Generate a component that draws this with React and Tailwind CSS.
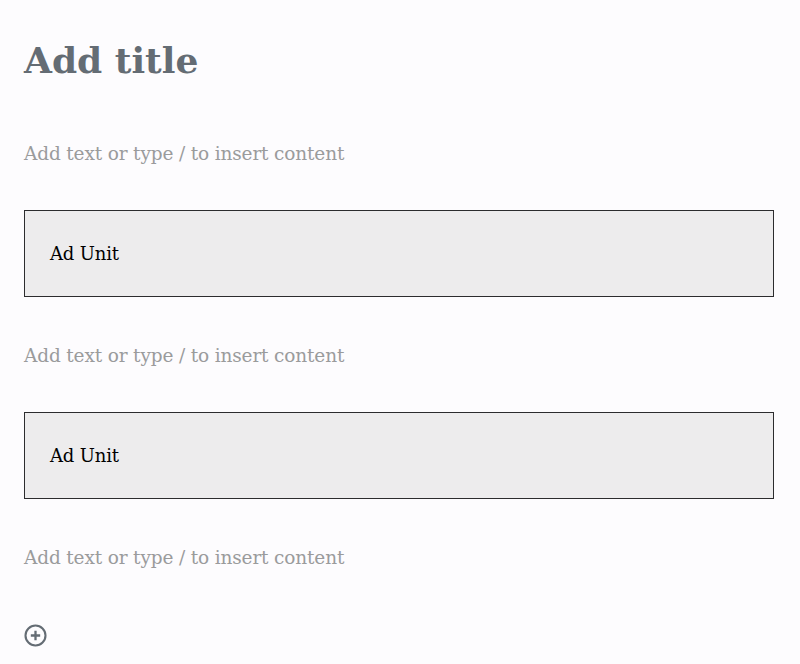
import React from "react";

const serif = { fontFamily: '"DejaVu Serif", "Liberation Serif", serif' };

function Placeholder() {
  return (
    <p className="text-[18.5px] leading-[28px] text-[#9a9b9c] tracking-[-0.15px]" style={serif}>
      Add text or type / to insert content
    </p>
  );
}

function AdUnit() {
  return (
    <div className="h-[87px] border border-[#2c2c2e] bg-[#edeced] flex items-center pl-[25px]">
      <span className="text-[18px] text-black tracking-[-0.15px]" style={serif}>Ad Unit</span>
    </div>
  );
}

export default function App() {
  return (
    <div className="w-[800px] h-[664px] bg-[#fdfcfe] overflow-hidden px-[24px] pt-[36px]">
      <h1 className="text-[36px] leading-[48px] font-bold text-[#646c74]" style={serif}>Add title</h1>
      <div className="mt-[56px]"><Placeholder /></div>
      <div className="mt-[42px] mr-[2px]"><AdUnit /></div>
      <div className="mt-[45px]"><Placeholder /></div>
      <div className="mt-[42px] mr-[2px]"><AdUnit /></div>
      <div className="mt-[45px]"><Placeholder /></div>
      <div className="mt-[51px] -ml-[1px]">
        <svg width="25" height="25" viewBox="0 0 24 24" fill="none">
          <circle cx="12" cy="12" r="9.6" stroke="#646c74" strokeWidth="2" />
          <path d="M12 7.5v9M7.5 12h9" stroke="#646c74" strokeWidth="2.2" />
        </svg>
      </div>
    </div>
  );
}
